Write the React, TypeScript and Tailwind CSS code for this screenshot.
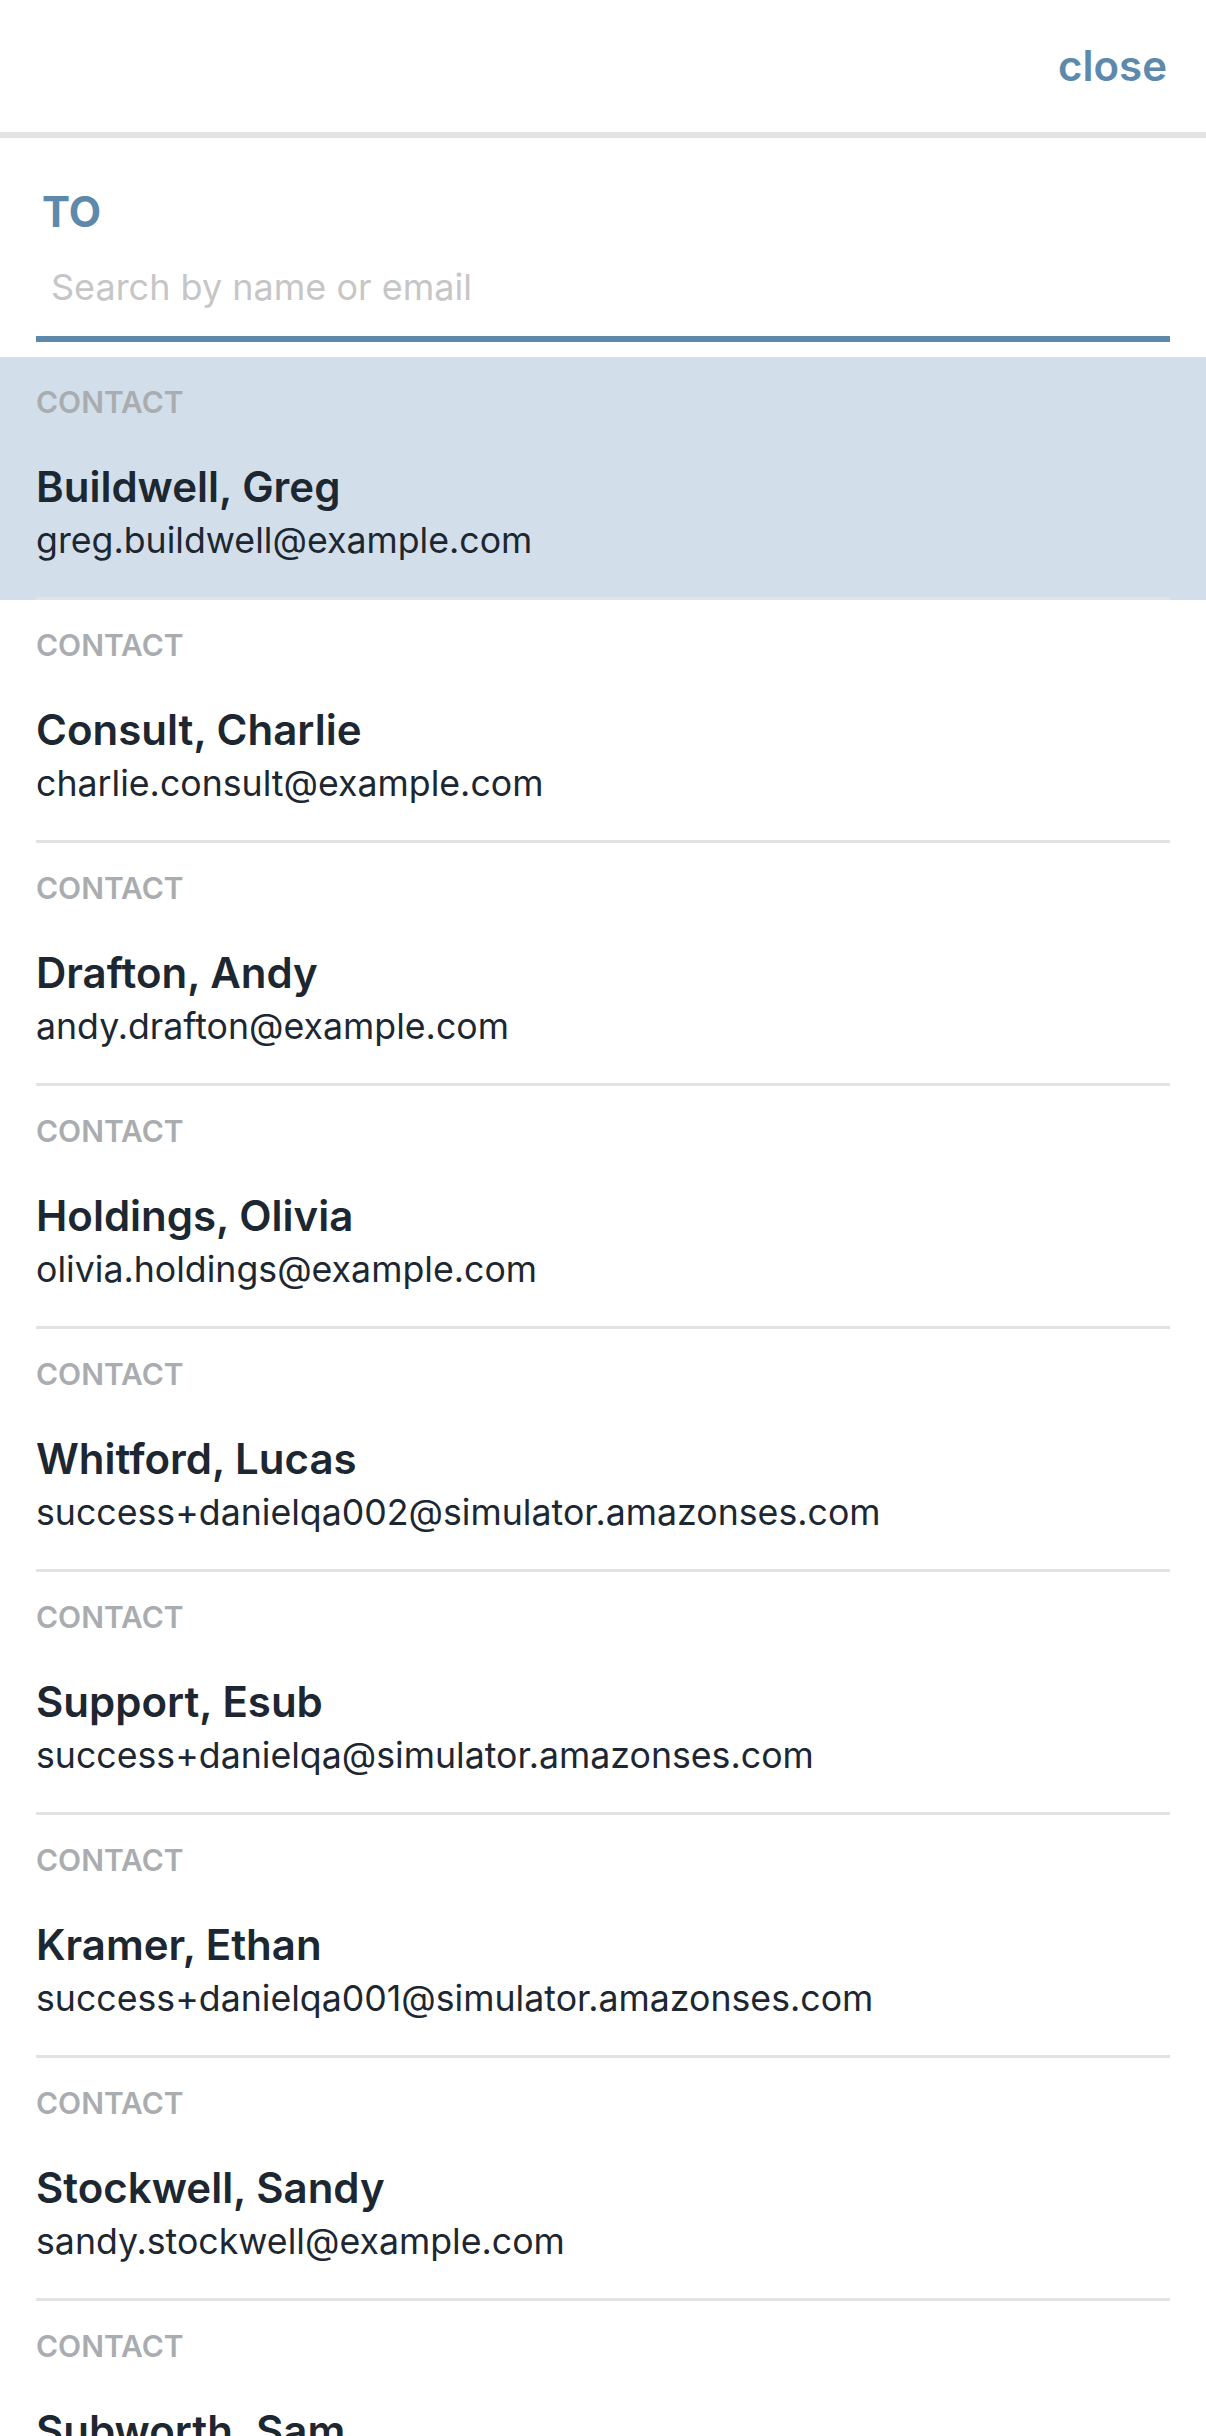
import React from "react";

type Contact = { name: string; email: string };

const contacts: Contact[] = [
  { name: "Buildwell, Greg", email: "greg.buildwell@example.com" },
  { name: "Consult, Charlie", email: "charlie.consult@example.com" },
  { name: "Drafton, Andy", email: "andy.drafton@example.com" },
  { name: "Holdings, Olivia", email: "olivia.holdings@example.com" },
  { name: "Whitford, Lucas", email: "success+danielqa002@simulator.amazonses.com" },
  { name: "Support, Esub", email: "success+danielqa@simulator.amazonses.com" },
  { name: "Kramer, Ethan", email: "success+danielqa001@simulator.amazonses.com" },
  { name: "Stockwell, Sandy", email: "sandy.stockwell@example.com" },
  { name: "Subworth, Sam", email: "sam.subworth@example.com" },
];

function ContactRow({ contact, active }: { contact: Contact; active: boolean }) {
  return (
    <li className={active ? "bg-[#d2dfeb]" : "bg-white"}>
      <div className="mx-[36px] border-b-[3px] border-[#e2e3e5] pt-[27px] pb-[35px]">
        <div className="text-[30px] leading-[36px] font-semibold uppercase text-[#a9adb0]">
          Contact
        </div>
        <div className="mt-[42px] text-[42px] leading-[50px] font-semibold text-[#1d2731]">
          {contact.name}
        </div>
        <div className="mt-[6px] text-[35.7px] leading-[44px] text-[#1d2731]">
          {contact.email}
        </div>
      </div>
    </li>
  );
}

export default function App() {
  return (
    <div
      className="h-[2436px] w-[1206px] overflow-hidden bg-white"
      style={{ fontFamily: "Inter, 'Noto Sans', sans-serif" }}
    >
      <header className="flex h-[132px] items-start justify-end pr-[39px] pt-[41px]">
        <button className="text-[42px] leading-[50px] font-semibold text-[#5d89ab]">close</button>
      </header>
      <div className="h-[6px] bg-[#e2e3e5]" />

      <section className="px-[36px] pt-[49px]">
        <div className="pl-[6px] text-[42px] leading-[50px] font-bold text-[#5d89ab]">TO</div>
        <div className="border-b-[6px] border-[#5d89ab]">
          <input
            type="text"
            placeholder="Search by name or email"
            className="h-[99px] w-full bg-transparent px-[15px] text-[36px] text-[#1d2731] outline-none placeholder:text-[#c6c6c6]"
          />
        </div>
      </section>

      <ul className="mt-[15px]">
        {contacts.map((c, i) => (
          <ContactRow key={c.email} contact={c} active={i === 0} />
        ))}
      </ul>
    </div>
  );
}
